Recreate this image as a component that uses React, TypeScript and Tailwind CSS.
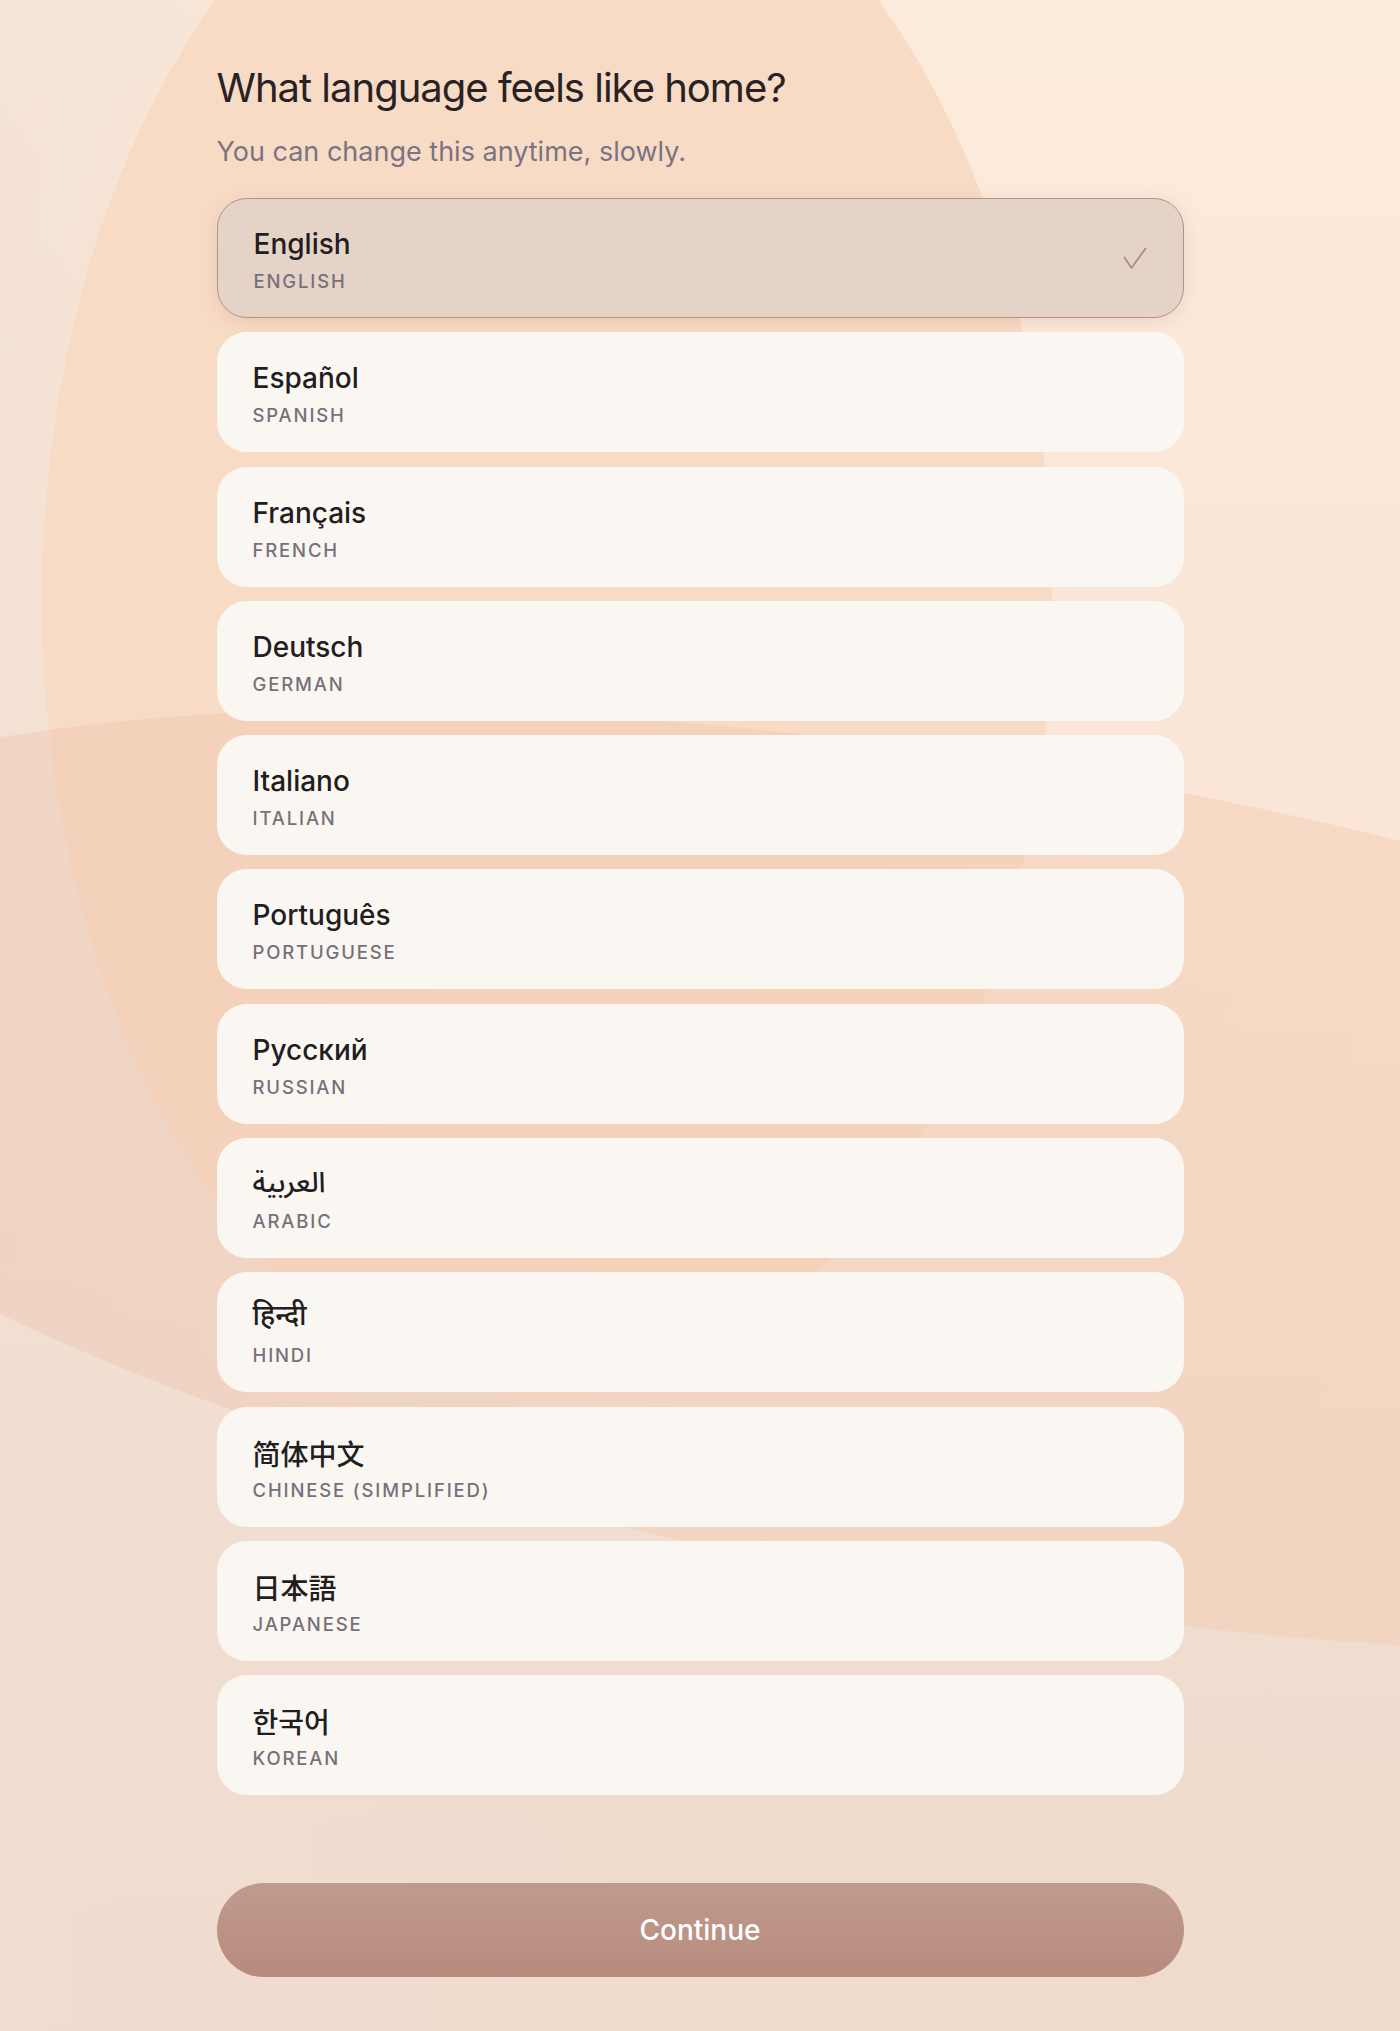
import React from 'react';

type Language = {
  code: string;
  name: string;
  english: string;
  fontClass?: string;
};

const languages: Language[] = [
  { code: 'en', name: 'English', english: 'English' },
  { code: 'es', name: 'Español', english: 'Spanish' },
  { code: 'fr', name: 'Français', english: 'French' },
  { code: 'de', name: 'Deutsch', english: 'German' },
  { code: 'it', name: 'Italiano', english: 'Italian' },
  { code: 'pt', name: 'Português', english: 'Portuguese' },
  { code: 'ru', name: 'Русский', english: 'Russian' },
  { code: 'ar', name: 'العربية', english: 'Arabic', fontClass: "font-['Noto_Sans_Arabic','DejaVu_Sans',sans-serif]" },
  { code: 'hi', name: 'हिन्दी', english: 'Hindi', fontClass: "font-['Noto_Sans_Devanagari','Noto_Sans',sans-serif]" },
  { code: 'zh', name: '简体中文', english: 'Chinese (Simplified)', fontClass: "font-['Noto_Sans_CJK_SC',sans-serif]" },
  { code: 'ja', name: '日本語', english: 'Japanese', fontClass: "font-['Noto_Sans_CJK_JP',sans-serif]" },
  { code: 'ko', name: '한국어', english: 'Korean', fontClass: "font-['Noto_Sans_CJK_KR',sans-serif]" },
];

function CheckMark() {
  return (
    <svg width="24" height="23" viewBox="0 0 24 23" fill="none" className="shrink-0">
      <path d="M1.5 10.5 L8.5 21 L22.5 1.5" stroke="#ad8a80" strokeWidth="1.7" strokeLinecap="round" strokeLinejoin="round" />
    </svg>
  );
}

function LanguageRow({ lang, selected }: { lang: Language; selected: boolean }) {
  return (
    <li
      className={`flex h-[120px] items-center justify-between rounded-[30px] pl-[36px] pr-[36px] ${
        selected
          ? 'border-[1.5px] border-[#b79186] bg-[#e6d3c8] shadow-[0_4px_18px_rgba(170,120,100,0.18)]'
          : 'bg-[#faf7f2]'
      }`}
    >
      <div className="flex flex-col gap-[8px] pt-[4px]">
        <span className={`h-[34px] text-[28px] leading-[34px] font-medium text-[#221d1f] ${lang.fontClass ?? ''}`}>
          {lang.name}
        </span>
        <span className="text-[18.5px] leading-[24px] font-medium uppercase tracking-[0.1em] text-[#77707b]">
          {lang.english}
        </span>
      </div>
      {selected && <CheckMark />}
    </li>
  );
}

export default function App() {
  const selected = 'en';

  return (
    <div className="relative min-h-[2031px] overflow-hidden bg-[linear-gradient(to_right,rgba(240,222,210,0.6),rgba(240,222,210,0)_50%),linear-gradient(to_bottom,#fdebdc_0%,#fae5d6_40%,#f1ddcf_80%,#efdbcc_100%)] font-['Inter','Noto_Sans','DejaVu_Sans',sans-serif]">
      {/* soft background blobs */}
      <div aria-hidden className="pointer-events-none absolute inset-0">
        <div className="absolute left-[42px] top-[-195px] h-[1590px] w-[1010px] rounded-[50%] bg-[#f8dbc5]" />
        <div className="absolute left-[-392px] top-[766px] h-[830px] w-[2784px] rotate-[9.7deg] rounded-[50%] bg-[linear-gradient(to_right,rgba(232,185,165,0.32),rgba(247,208,175,0.45))]" />
      </div>

      <main className="relative mx-auto w-[967px] pt-[64px]">
        <h1 className="text-[40px] leading-[48px] font-normal tracking-[-0.025em] text-[#292225]">
          What language feels like home?
        </h1>
        <p className="mt-[22px] text-[27px] leading-[36px] text-[#7b7383]">
          You can change this anytime, slowly.
        </p>

        <ul className="mt-[28px] flex flex-col gap-[14.3px]">
          {languages.map((lang) => (
            <LanguageRow key={lang.code} lang={lang} selected={lang.code === selected} />
          ))}
        </ul>

        <button
          type="button"
          className="mt-[88px] flex h-[94px] w-full items-center justify-center rounded-full bg-gradient-to-b from-[#c09b8d] to-[#b78b7e] text-[28px] font-medium text-white"
        >
          Continue
        </button>
      </main>
    </div>
  );
}
